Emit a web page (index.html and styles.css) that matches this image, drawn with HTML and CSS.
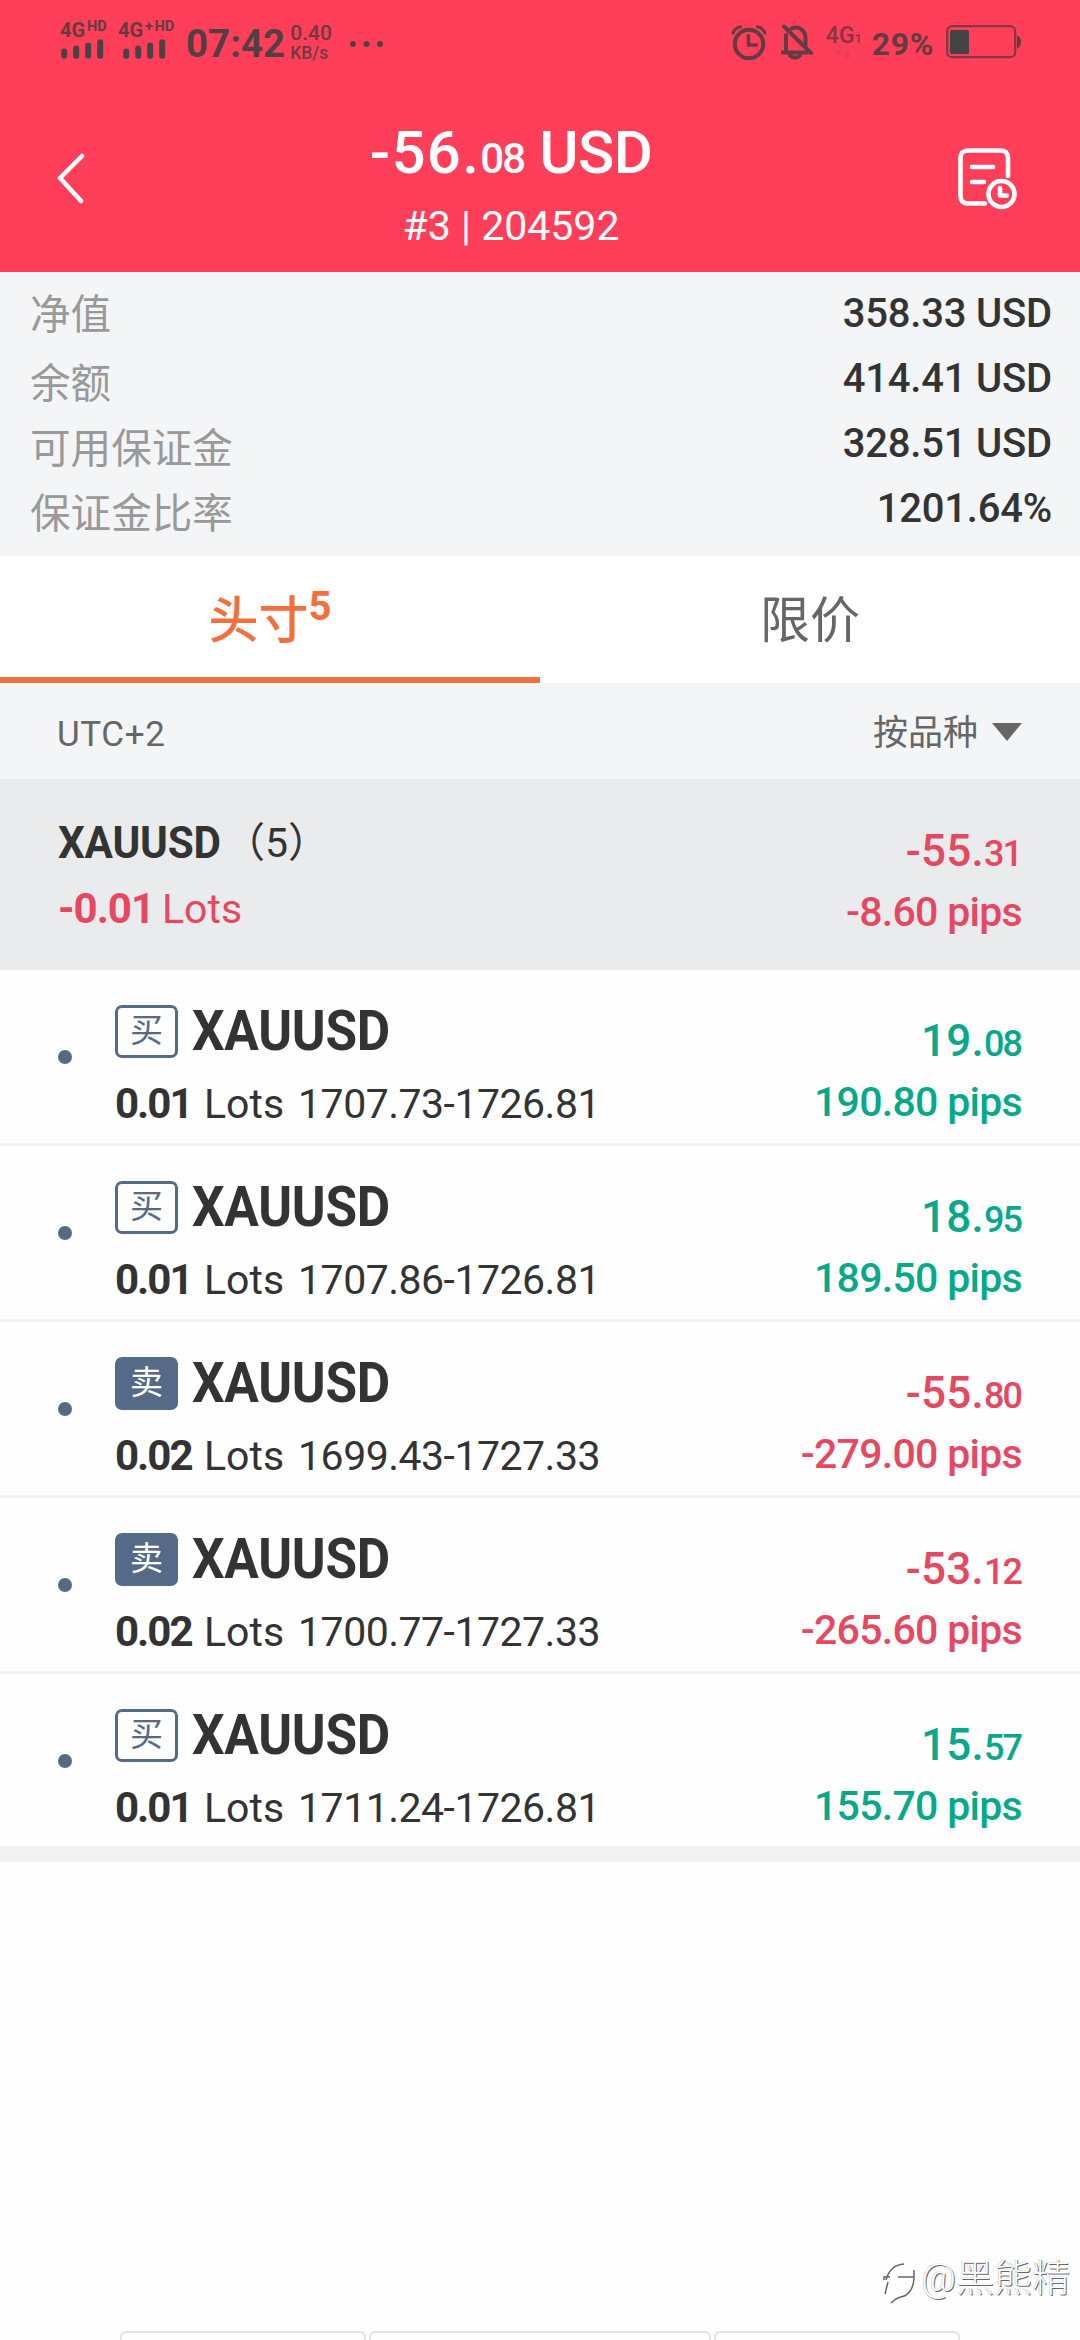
FILE: index.html
```html
<!DOCTYPE html>
<html lang="zh-CN">
<head>
<meta charset="utf-8">
<title>XAUUSD 头寸</title>
<link rel="stylesheet" href="styles.css">
</head>
<body>
<div class="screen">
  <header class="top">
    <div class="status">
      <div class="sim">
        <div class="net">4G<span class="hd">HD</span></div>
        <svg class="bars" width="44" height="20" viewBox="0 0 44 20"><path d="M3.2 12.5V16.8M15.2 9.5V16.8M27.2 6.5V16.8M39.2 3.2V16.8"/></svg>
      </div>
      <div class="sim sim2">
        <div class="net">4G<span class="hd">+ HD</span></div>
        <svg class="bars" width="44" height="20" viewBox="0 0 44 20"><path d="M3.2 12.5V16.8M15.2 9.5V16.8M27.2 6.5V16.8M39.2 3.2V16.8"/></svg>
      </div>
      <div class="clock">07:42</div>
      <div class="speed"><span class="rate">0.40</span><span class="unit">KB/s</span></div>
      <svg class="more" width="34" height="6" viewBox="0 0 34 6"><circle cx="3" cy="3" r="3"/><circle cx="16.5" cy="3" r="3"/><circle cx="30" cy="3" r="3"/></svg>
      <div class="status-right">
        <svg class="alarm" width="36" height="36" viewBox="0 0 36 36"><circle cx="18" cy="20" r="14.2" stroke-width="4"/><path d="M17.5 11.5V21H25.5" stroke-width="3.4"/><path d="M2 9Q4 4 9.5 2.8M34 9Q32 4 26.5 2.8" stroke-width="3.2"/></svg>
        <svg class="bell" width="32" height="36" viewBox="0 0 32 36"><path d="M1 28.5H26M5 28V11M10.5 4.5C18 1.5 24.5 6.5 24.5 14V21" stroke-width="4"/><path d="M3 2.5L30 29" stroke-width="4"/><path d="M9 31.5Q14 36 19 31.5" stroke-width="4"/></svg>
        <div class="data"><span>4G</span><small>1</small>
          <svg class="arrows" width="18" height="8" viewBox="0 0 18 8"><path d="M1 0H8L4.500 8ZM10 8H17L13.500 0Z"/></svg>
        </div>
        <div class="pct">29%</div>
        <svg class="battery" width="76" height="34" viewBox="0 0 76 34"><rect x="1.200" y="1.200" width="68" height="31" rx="5" fill="none" stroke="#843742" stroke-width="2.200"/><rect x="4" y="5" width="19" height="24" rx="1.500" fill="#444345"/><path d="M71 10.500Q75 12 75 17T71 23.500Z" fill="#5c3d42"/></svg>
      </div>
    </div>
    <div class="nav">
      <svg class="back" width="30" height="52" viewBox="0 0 30 52"><path d="M27 3L5 25L26 48"/></svg>
      <div class="title">
        <div class="amount"><span class="int">-56.</span><span class="dec">08</span><span class="cur">USD</span></div>
        <div class="account">#3 | 204592</div>
      </div>
      <svg class="history" width="62" height="64" viewBox="0 0 62 64"><path d="M29 57.500H12Q4.500 57.500 4.500 50V12Q4.500 4.500 12 4.500H44Q52 4.500 52 12V30M16 21H37M16 36H28"/><circle cx="45.500" cy="48" r="13"/><path d="M44 42V49.500H51"/></svg>
    </div>
  </header>

  <section class="summary">
    <div class="labels"><span class="first">净值</span><span>余额</span><span>可用保证金</span><span>保证金比率</span></div>
    <div class="values"><span>358.33 USD</span><span>414.41 USD</span><span>328.51 USD</span><span>1201.64%</span></div>
  </section>

  <nav class="tabs">
    <div class="tab active">头寸<span class="count">5</span></div>
    <div class="tab">限价</div>
  </nav>

  <div class="filter">
    <span class="zone">UTC+2</span>
    <span class="sort">按品种<i class="caret"></i></span>
  </div>

  <section class="group">
    <div class="left">
      <div class="gname"><b>XAUUSD</b><span>（5）</span></div>
      <div class="lots red"><b class="neg">-0.01</b><span>Lots</span></div>
    </div>
    <div class="right red"><div class="pl"><span class="int">-55.</span><span class="dec">31</span></div><div class="pips">-8.60 pips</div></div>
  </section>

  <main class="list">
    <article class="row">
      <i class="dot"></i>
      <div class="left"><div class="name"><span class="badge buy">买</span><b>XAUUSD</b></div><div class="lots"><b>0.01</b><span>Lots</span><span class="price">1707.73-1726.81</span></div></div>
      <div class="right green"><div class="pl"><span class="int">19.</span><span class="dec">08</span></div><div class="pips">190.80 pips</div></div>
    </article>
    <article class="row">
      <i class="dot"></i>
      <div class="left"><div class="name"><span class="badge buy">买</span><b>XAUUSD</b></div><div class="lots"><b>0.01</b><span>Lots</span><span class="price">1707.86-1726.81</span></div></div>
      <div class="right green"><div class="pl"><span class="int">18.</span><span class="dec">95</span></div><div class="pips">189.50 pips</div></div>
    </article>
    <article class="row">
      <i class="dot"></i>
      <div class="left"><div class="name"><span class="badge sell">卖</span><b>XAUUSD</b></div><div class="lots"><b>0.02</b><span>Lots</span><span class="price">1699.43-1727.33</span></div></div>
      <div class="right red"><div class="pl"><span class="int">-55.</span><span class="dec">80</span></div><div class="pips">-279.00 pips</div></div>
    </article>
    <article class="row">
      <i class="dot"></i>
      <div class="left"><div class="name"><span class="badge sell">卖</span><b>XAUUSD</b></div><div class="lots"><b>0.02</b><span>Lots</span><span class="price">1700.77-1727.33</span></div></div>
      <div class="right red"><div class="pl"><span class="int">-53.</span><span class="dec">12</span></div><div class="pips">-265.60 pips</div></div>
    </article>
    <article class="row">
      <i class="dot"></i>
      <div class="left"><div class="name"><span class="badge buy">买</span><b>XAUUSD</b></div><div class="lots"><b>0.01</b><span>Lots</span><span class="price">1711.24-1726.81</span></div></div>
      <div class="right green"><div class="pl"><span class="int">15.</span><span class="dec">57</span></div><div class="pips">155.70 pips</div></div>
    </article>
  </main>

  <footer class="buttons"><span></span><span></span><span></span></footer>
  <div class="watermark">
    <svg width="38" height="44" viewBox="0 0 38 44"><path d="M3 18Q7 3 21 2M1 18V15H7M5 20L2 32M15 15H31V8M31 15C31 28 24 34 18 35Q13 36 8 41"/></svg>
    <span>@黑熊精</span>
  </div>
</div>
</body>
</html>
```
FILE: styles.css
```css
* { box-sizing: border-box; }
body { margin: 0; background: #fff; }
svg { display: block; flex: none; }

.screen {
  position: relative;
  display: flex;
  flex-direction: column;
  width: 1080px;
  height: 2340px;
  overflow: hidden;
  background: #fefefe;
  color: #333;
  font-family: Roboto, "Noto Sans CJK SC", sans-serif;
  white-space: nowrap;
}

/* header */
.top { height: 272px; background: #ff3e5a; }
.status { display: flex; height: 84px; color: #633c42; }
.sim { width: 58px; margin: 20px 0 0 60px; }
.sim2 { margin-left: 0; width: 68px; }
.net { display: flex; height: 18px; font-size: 20px; font-weight: 700; line-height: 20px; }
.hd { margin-left: 2px; font-size: 14.5px; line-height: 14px; white-space: pre; word-spacing: -2px; }
.bars { margin: 1px 0 0 1px; stroke: #4b4144; stroke-width: 6; stroke-linecap: round; }
.sim2 .bars { margin-left: 5px; }
.clock { margin-top: 21px; height: 46px; font-size: 38.5px; font-weight: 700; line-height: 46px; color: #523f43; }
.speed { display: flex; flex-direction: column; width: 60px; margin: 22px 0 0 5px; color: #6b3b42; font-weight: 500; }
.rate { font-size: 21px; line-height: 22px; }
.unit { font-size: 17.5px; line-height: 18px; }
.more { margin-top: 41px; fill: #523f43; }
.status-right { display: flex; margin-left: auto; padding-right: 58px; }
.alarm, .bell { margin-top: 24px; fill: none; stroke: #633c42; stroke-linecap: round; }
.bell { margin-left: 14px; }
.data { position: relative; display: flex; align-items: baseline; width: 37px; height: 34px; margin: 19px 0 0 13px; font-size: 23px; font-weight: 500; line-height: 34px; color: #843742; }
.data small { font-size: 13px; }
.arrows { position: absolute; left: 8px; top: 31px; fill: #e5405a; }
.pct { margin: 21px 0 0 9px; height: 46px; font-size: 32px; font-weight: 700; line-height: 46px; letter-spacing: .6px; color: #633c42; }
.battery { margin: 25px 0 0 12px; }

.nav { display: flex; height: 188px; }
.back { margin: 69px 0 0 55px; fill: none; stroke: #fff; stroke-width: 4.5; stroke-linecap: round; stroke-linejoin: round; }
.title { flex: 1; display: flex; flex-direction: column; align-items: center; margin: 0 24px 0 5px; color: #fff; }
.amount { display: flex; align-items: baseline; height: 102px; padding-top: 33px; font-size: 60px; font-weight: 500; line-height: 72px; }
.amount .int { letter-spacing: 1.3px; }
.amount .dec { font-size: 42px; letter-spacing: -1.8px; }
.amount .cur { margin-left: 15px; letter-spacing: -.6px; }
.account { font-size: 41px; line-height: 80px; }
.history { margin: 62px 62px 0 0; fill: none; stroke: #fff; stroke-width: 4.6; stroke-linecap: round; stroke-linejoin: round; }

/* account summary */
.summary { display: flex; justify-content: space-between; height: 284px; padding: 0 28px 0 30px; background: #f4f5f7; }
.labels, .values { display: flex; flex-direction: column; font-size: 40px; line-height: 65px; }
.labels { padding-top: 6px; font-size: 40.6px; color: #999; }
.labels .first { line-height: 74px; }
.values { align-items: flex-end; padding-top: 9px; font-weight: 500; letter-spacing: -.2px; }

/* tabs */
.tabs { display: flex; height: 127px; background: #fff; }
.tab { display: flex; flex: 1; justify-content: center; border-bottom: 6px solid transparent; font-size: 50px; line-height: 130px; color: #666; }
.tab.active { border-color: #f07140; color: #f36f3d; font-weight: 500; }
.count { font-size: 40px; font-weight: 700; line-height: 102px; }

.filter { display: flex; justify-content: space-between; height: 96px; padding: 0 58px 0 57px; background: #f4f5f7; font-size: 35px; line-height: 103px; color: #666; }
.zone { letter-spacing: .6px; }
.sort { display: flex; line-height: 102px; }
.caret { width: 30px; height: 18px; margin: 40px 0 0 14px; background: #666; clip-path: polygon(0 0, 100% 0, 50% 100%); }

/* group header */
.group { display: flex; justify-content: space-between; height: 191px; padding: 0 58px; background: #eaebed; }
.group .left { padding-top: 31px; line-height: 66px; }
.gname { display: flex; height: 66px; font-size: 44px; }
.gname b { width: 162px; transform: scaleX(.96); transform-origin: left; letter-spacing: -.2px; }
.gname span { margin-left: 4px; font-size: 41px; }
.lots { display: flex; font-size: 41px; }
.lots b { width: 89px; font-size: 42px; letter-spacing: -2px; }
.lots b.neg { width: 104px; letter-spacing: -1px; }
.price { margin-left: 14px; letter-spacing: -.5px; }
.right { display: flex; flex-direction: column; align-items: flex-end; padding-top: 42px; font-weight: 500; line-height: 61px; }
.pl { display: flex; align-items: baseline; height: 61px; }
.pl .int { font-size: 44px; letter-spacing: .3px; }
.pl .dec { font-size: 36px; letter-spacing: -2px; margin-right: 1px; }
.pips { font-size: 41px; letter-spacing: -.7px; }
.red { color: #e54860; }
.green { color: #08a88a; }

/* positions */
.list { border-bottom: 16px solid #f2f2f3; }
.row { display: flex; height: 176px; padding: 0 58px; border-bottom: 3px solid #f1f2f3; background: #fefefe; }
.row:last-child { height: 172px; border: 0; }
.row .left { flex: 1; margin-left: 43px; padding-top: 25px; }
.row .right { padding-top: 41px; }
.dot { width: 14px; height: 14px; margin-top: 80px; border-radius: 50%; background: #546a87; }
.name { display: flex; align-items: center; height: 72px; line-height: 72px; }
.name b { margin-left: 14px; font-size: 55px; letter-spacing: -.3px; transform: scaleX(.935); transform-origin: left; }
.row .lots { line-height: 74px; }
.badge { width: 63px; height: 53px; border: 3px solid #546a87; border-radius: 7px; font-size: 33px; line-height: 45px; text-align: center; color: #546a87; }
.badge.sell { background: #546a87; color: #fff; }

/* bottom bar, cut off by the screen edge */
.buttons { display: flex; gap: 3px; margin-top: auto; padding-left: 120px; height: 9px; overflow: hidden; }
.buttons span { width: 246px; height: 30px; border: 2px solid #e4e4e4; border-radius: 6px; }
.buttons span:nth-child(2) { width: 342px; }

.watermark { position: absolute; right: 10px; top: 2254px; display: flex; color: #fff; font-size: 38px; font-weight: 300; line-height: 48px; text-shadow: 1px 1px 0 #666, -.5px -.5px 0 #bbb; }
.watermark svg { margin-top: 8px; fill: none; stroke: #666; stroke-width: 1.5; }
```
